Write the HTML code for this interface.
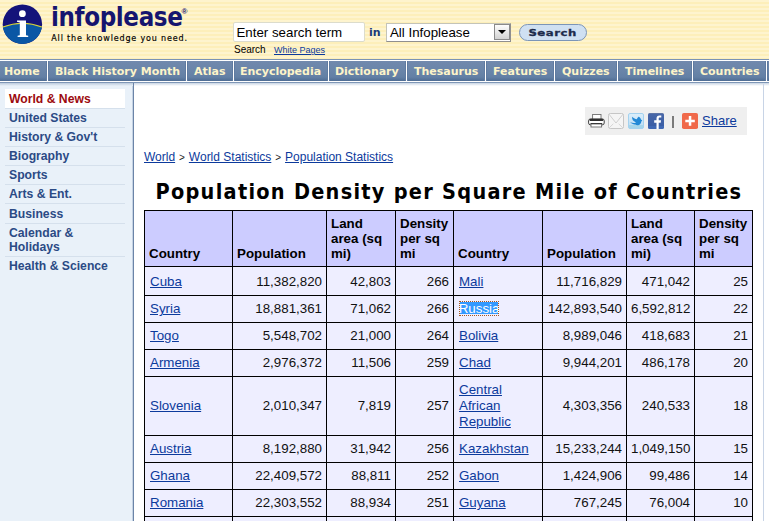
<!DOCTYPE html>
<html><head><meta charset="utf-8"><title>Population Density per Square Mile of Countries</title>
<style>
html,body{margin:0;padding:0;}
body{width:769px;height:521px;overflow:hidden;background:#fff;font-family:"Liberation Sans",Arial,sans-serif;font-size:12px;color:#000;position:relative;}
a{color:#0c3a9c;text-decoration:underline;}
#hdr{position:absolute;left:0;top:0;width:769px;height:59px;background:#fdf3c6;background-image:repeating-linear-gradient(to bottom,#fef4ce 0,#fef4ce 2px,#fdefba 2px,#fdefba 4px);}
#logo{position:absolute;left:2px;top:4px;}
#brand{position:absolute;left:50.5px;top:0px;font:bold 27px/34px "DejaVu Sans Condensed","DejaVu Sans",sans-serif;color:#15156f;white-space:nowrap;letter-spacing:-0.4px;transform-origin:left top;transform:scaleX(0.95);}
#reg{position:absolute;left:181.5px;top:6.5px;font:bold 8px/10px "Liberation Sans",sans-serif;color:#15156f;}
#tag{-webkit-text-stroke:0.15px #000;position:absolute;left:51.3px;top:34px;font:8px/10px "DejaVu Sans",sans-serif;color:#000;letter-spacing:0.84px;white-space:nowrap;}
#q{position:absolute;left:233px;top:22px;width:132px;height:20px;background:#fff;border:1px solid #dcdccc;border-radius:2px;box-sizing:border-box;font-size:13.3px;line-height:18px;padding-top:1px;padding-left:2.5px;white-space:nowrap;}
#in{position:absolute;left:369px;top:25.5px;font:bold 11px/14px "DejaVu Sans",sans-serif;color:#1a3a7c;}
#sel{position:absolute;left:386px;top:23px;width:125px;height:19px;background:#fff;border:1px solid;border-color:#c4c4b8 #8f8f8f #8f8f8f #c4c4b8;box-sizing:border-box;font-size:13.3px;line-height:17px;padding-left:3px;white-space:nowrap;}
#sel i{position:absolute;right:0;top:0;width:16px;height:16px;border:1px solid #8a8a8a;background:linear-gradient(#fdfdfd,#d2d2d2);box-sizing:border-box;}
#sel i:after{content:"";position:absolute;left:3px;top:5px;border:4px solid transparent;border-top:4px solid #000;border-bottom:0;}
#btn{position:absolute;left:519px;top:24px;width:68px;height:17px;box-sizing:border-box;border:1px solid #7b95b8;border-radius:9px;background:#cfe0f2;font:bold 10px/15px "DejaVu Sans",sans-serif;color:#1c2b4e;text-align:center;letter-spacing:0.4px;}
#btn span{display:inline-block;transform:scaleX(1.3);font-size:9px;-webkit-text-stroke:0.3px #1f2c48;}
#sub{position:absolute;left:234px;top:44px;font-size:10px;line-height:12px;white-space:nowrap;}
#sub a{position:absolute;left:40px;top:0;font-size:9px;}
#nav{position:absolute;left:0;top:59px;width:769px;height:24px;background:#fff;border-top:1px solid #7b93b5;border-bottom:1px solid #7e96b6;box-sizing:border-box;}
#nav span{position:absolute;top:1px;height:20px;box-sizing:border-box;background:linear-gradient(to bottom,#7189ad 0,#6b86aa 40%,#6380a5 80%,#4f6d94 100%);border-left:1px solid #5f7ba1;border-right:1px solid #5f7ba1;font:bold 11px/22px "DejaVu Sans",sans-serif;color:#fdf4c9;padding-left:6px;letter-spacing:-0.02px;white-space:nowrap;overflow:hidden;}
#shadow{position:absolute;left:0;top:83px;width:769px;height:3px;background:linear-gradient(to bottom,#c9d5e4,#fff);}
#side{position:absolute;left:0;top:83px;width:133px;height:438px;background:#e9f1f9;border-right:1px solid #6b84a8;box-shadow:inset -1px 0 0 #c5d3e3;}
#side:before{content:"";position:absolute;left:0;top:0;width:133px;height:3px;background:linear-gradient(to bottom,#bccbdd,#e9f1f9);}
#side div{position:absolute;left:5px;width:120px;box-sizing:border-box;padding-left:4px;border-bottom:1px solid #d5e0ec;font:bold 12.2px/14px "Liberation Sans",sans-serif;color:#2b4a85;}
#side div.on{background:#fff;color:#9c0a0e;}
#rb{position:absolute;left:763px;top:84px;width:1px;height:437px;background:#c8d4e6;}
#share{position:absolute;left:585px;top:107px;width:162px;height:28px;background:#efefef;}
#share svg{position:absolute;top:6px;}
#share a{position:absolute;left:117px;top:6px;font-size:13px;line-height:15px;}
#bar{position:absolute;left:87px;top:9px;width:2px;height:12px;background:#7a7a7a;}
#bc span{font-size:10px;padding:0 0.6px;color:#222;}
#bc{position:absolute;left:144px;top:150px;font-size:12px;line-height:14px;white-space:nowrap;}
h1{position:absolute;left:155.5px;top:178px;margin:0;font:bold 21.5px/28px "DejaVu Sans Condensed","DejaVu Sans",sans-serif;white-space:nowrap;letter-spacing:1.27px;color:#000;}
table{position:absolute;left:144px;top:210px;border-collapse:separate;border-spacing:0;table-layout:fixed;width:609px;font-size:13.33px;line-height:15px;}
td,th{border-left:1px solid #000;border-top:1px solid #000;padding:0 4px;box-sizing:border-box;white-space:normal;}
td:last-child,th:last-child{border-right:1px solid #000;}
th{background:#ccccff;text-align:left;vertical-align:bottom;font-weight:bold;padding-bottom:5px;height:56px;}
td{background:#eeeeff;text-align:right;height:27px;vertical-align:middle;color:#111;line-height:16px;}
td.c{text-align:left;padding-left:5px;padding-right:3px;}
tr.r1 td{padding-top:2px;}
.selx{margin-left:-0.3px;text-decoration:none;color:#fff;background:linear-gradient(#3399ff,#3399ff) 1px 0.5px/calc(100% - 2px) 12px no-repeat;outline:1px dotted #a8571c;outline-offset:-1px;}
</style></head><body>
<div id="hdr">
<svg id="logo" width="42" height="42" viewBox="0 0 42 42"><circle cx="20.4" cy="20.3" r="19.7" fill="#14137a"/><path d="M0.9 23 Q20.4 15.5 39.9 23 A19.7 19.7 0 0 1 0.9 23Z" fill="#0a57a5"/><path d="M0.9 23 Q20.4 15.5 39.9 23" fill="none" stroke="#dcd436" stroke-width="1.2"/><circle cx="20.4" cy="9.7" r="3.4" fill="#fff"/><path d="M15 16.4h9v14.8l2.2 0.6v1.2H15.6v-1.2l2.2-0.6V18.6l-2.8-0.8z" fill="#fff"/></svg>
<div id="brand">infoplease</div><div id="reg">®</div>
<div id="tag">All the knowledge you need.</div>
<div id="q">Enter search term</div><div id="in">in</div>
<div id="sel">All Infoplease<i></i></div>
<div id="btn"><span>Search</span></div>
<div id="sub">Search<a href="#">White Pages</a></div>
</div>
<div id="nav"><span style="left:-1px;width:48px;padding-left:4px">Home</span><span style="left:48px;width:138px">Black History Month</span><span style="left:187px;width:46px">Atlas</span><span style="left:234px;width:94px;padding-left:5px">Encyclopedia</span><span style="left:329px;width:77px;padding-left:5px">Dictionary</span><span style="left:407px;width:78px">Thesaurus</span><span style="left:486px;width:68px">Features</span><span style="left:555px;width:62px">Quizzes</span><span style="left:618px;width:74px">Timelines</span><span style="left:693px;width:73px">Countries</span><span style="left:767px;width:10px"></span></div>
<div id="side">
<div class="on" style="top:6px;height:20px;padding-top:3px">World &amp; News</div>
<div style="top:25px;height:20px;padding-top:3px">United States</div>
<div style="top:44px;height:20px;padding-top:3px">History &amp; Gov't</div>
<div style="top:63px;height:20px;padding-top:3px">Biography</div>
<div style="top:82px;height:20px;padding-top:3px">Sports</div>
<div style="top:101px;height:20px;padding-top:3px">Arts &amp; Ent.</div>
<div style="top:120px;height:21px;padding-top:4px">Business</div>
<div style="top:140px;height:34px;padding-top:3px">Calendar &amp;<br>Holidays</div>
<div style="top:173px;height:20px;padding-top:3px;border-bottom:0">Health &amp; Science</div>
</div>
<div id="shadow" style="left:134px"></div>
<div id="rb"></div>
<div id="share">
<svg style="left:3px" width="17" height="16" viewBox="0 0 17 16"><rect x="4.6" y="1.5" width="8.4" height="5" fill="#fff" stroke="#6e6e6e" stroke-width="0.9"/><rect x="0.6" y="5.9" width="15.6" height="6" rx="2" fill="#fff" stroke="#3a3a3a" stroke-width="1"/><rect x="1.6" y="6" width="13.6" height="1.9" rx="0.6" fill="#2e2e2e"/><rect x="2.6" y="10" width="11.6" height="1.3" fill="#111"/><rect x="3" y="11" width="10.6" height="3" fill="#fff" stroke="#6a6a6a" stroke-width="0.9"/></svg>
<svg style="left:23px" width="16" height="16" viewBox="0 0 16 16"><rect x="0.5" y="0.5" width="15" height="15" rx="1.8" fill="#f5f5f5" stroke="#c6c6c6"/><path d="M1 1.2L8 10L15 1.200" fill="none" stroke="#cfcfcf" stroke-width="1"/><path d="M1 15L5.300 10.800M15 15L10.700 10.800" fill="none" stroke="#d6d6d6" stroke-width="1"/></svg>
<svg style="left:43px" width="16" height="16" viewBox="0 0 16 16"><defs><linearGradient id="tw" x1="0" y1="0" x2="0" y2="1"><stop offset="0" stop-color="#dbeffb"/><stop offset="0.74" stop-color="#c3e0f5"/><stop offset="0.76" stop-color="#a9d7ea"/><stop offset="1" stop-color="#a3d3ea"/></linearGradient></defs><rect x="0.5" y="0.5" width="15" height="15" rx="1.5" fill="url(#tw)" stroke="#a4d2ef"/><path d="M14.2 7.300c-.5-.1-.9-.3-1.200-.7c-.4-1.300-1.300-2.600-2.600-2.800c-.7.700-1.300 1.500-1.600 2.500c-1.400-.2-3.100-1.100-4.600-2.600c-.3 1.600.2 3.100 1.500 4.400c.7.700 1.500 1.100 2.300 1.300c-1.400.9-3.500.7-5.900-.2c1.600 1.700 4.200 2.200 5.200 2.400c.9.700 1.900.9 3 .6c1.800-.5 2.900-2.100 3-3.800c.4-.3.700-.6.900-1.100z" fill="#2389d6"/></svg>
<svg style="left:63px" width="16" height="16" viewBox="0 0 16 16"><defs><linearGradient id="fb" x1="0" y1="0" x2="0" y2="1"><stop offset="0" stop-color="#6a7da6"/><stop offset="0.08" stop-color="#4867a8"/><stop offset="0.78" stop-color="#3b5ea5"/><stop offset="0.8" stop-color="#3f68b4"/><stop offset="1" stop-color="#3f68b4"/></linearGradient></defs><rect width="16" height="16" rx="1.5" fill="url(#fb)"/><path d="M10.700 16V9.800h2l.3-2.500h-2.300V5.800c0-.8.300-1.200 1.300-1.200h1.300V2.500c-.3 0-1-.1-1.800-.1c-1.900 0-3 1.100-3 3.100v1.800H6.200v2.500h2.300V16z" fill="#fff"/></svg>
<div id="bar"></div>
<svg style="left:97px" width="16" height="16" viewBox="0 0 16 16"><rect width="16" height="16" rx="1.800" fill="#f0694a"/><path d="M6.800 3.100h2.500v3.700h3.500v2.400H9.300v3.600H6.800V9.200H3.300V6.800h3.500z" fill="#fff"/></svg>
<a href="#">Share</a>
</div>
<div id="bc"><a href="#">World</a> <span>&gt;</span> <a href="#">World Statistics</a> <span>&gt;</span> <a href="#">Population Statistics</a></div>
<h1>Population Density per Square Mile of Countries</h1>
<table>
<colgroup><col style="width:88px"><col style="width:94px"><col style="width:69px"><col style="width:58px"><col style="width:89px"><col style="width:84px"><col style="width:68px"><col style="width:59px"></colgroup>
<tr><th>Country</th><th>Population</th><th>Land area (sq mi)</th><th>Density per sq mi</th><th>Country</th><th>Population</th><th>Land area (sq mi)</th><th>Density per sq mi</th></tr>
<tr class="r1"><td class="c" style="height:29px"><a href="#">Cuba</a></td><td>11,382,820</td><td>42,803</td><td>266</td><td class="c"><a href="#">Mali</a></td><td>11,716,829</td><td>471,042</td><td>25</td></tr>
<tr><td class="c"><a href="#">Syria</a></td><td>18,881,361</td><td>71,062</td><td>266</td><td class="c"><a href="#" class="selx">Russia</a></td><td>142,893,540</td><td>6,592,812</td><td>22</td></tr>
<tr><td class="c"><a href="#">Togo</a></td><td>5,548,702</td><td>21,000</td><td>264</td><td class="c"><a href="#">Bolivia</a></td><td>8,989,046</td><td>418,683</td><td>21</td></tr>
<tr><td class="c"><a href="#">Armenia</a></td><td>2,976,372</td><td>11,506</td><td>259</td><td class="c"><a href="#">Chad</a></td><td>9,944,201</td><td>486,178</td><td>20</td></tr>
<tr><td class="c" style="height:59px"><a href="#">Slovenia</a></td><td>2,010,347</td><td>7,819</td><td>257</td><td class="c"><a href="#">Central African Republic</a></td><td>4,303,356</td><td>240,533</td><td>18</td></tr>
<tr><td class="c"><a href="#">Austria</a></td><td>8,192,880</td><td>31,942</td><td>256</td><td class="c"><a href="#">Kazakhstan</a></td><td>15,233,244</td><td>1,049,150</td><td>15</td></tr>
<tr><td class="c"><a href="#">Ghana</a></td><td>22,409,572</td><td>88,811</td><td>252</td><td class="c"><a href="#">Gabon</a></td><td>1,424,906</td><td>99,486</td><td>14</td></tr>
<tr><td class="c"><a href="#">Romania</a></td><td>22,303,552</td><td>88,934</td><td>251</td><td class="c"><a href="#">Guyana</a></td><td>767,245</td><td>76,004</td><td>10</td></tr>
<tr><td class="c">&nbsp;</td><td>&nbsp;</td><td>&nbsp;</td><td>&nbsp;</td><td class="c">&nbsp;</td><td>&nbsp;</td><td>&nbsp;</td><td>&nbsp;</td></tr>
</table>
</body></html>
